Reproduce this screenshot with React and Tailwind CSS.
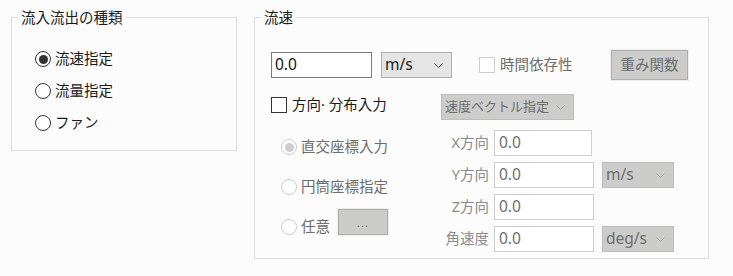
const Chevron = ({ color = '#555' }) => (
    <svg width="9" height="5" viewBox="0 0 9 5" fill="none">
        <polyline points="0.5,0.5 4.5,4.5 8.5,0.5" stroke={color} strokeWidth="1" />
    </svg>
);

const Radio = ({ checked, disabled }) => {
    const ring = disabled ? 'border-[#cccccc]' : 'border-[#333333]';
    const dot = disabled ? 'bg-[#cccccc]' : 'bg-[#333333]';
    return (
        <span className={`flex h-[16px] w-[16px] shrink-0 items-center justify-center rounded-full border bg-white ${ring}`}>
            {checked && <span className={`h-[9px] w-[9px] rounded-full ${dot}`} />}
        </span>
    );
};

const Checkbox = ({ disabled }) => (
    <span className={`block h-[16px] w-[16px] shrink-0 border bg-white ${disabled ? 'border-[#cccccc]' : 'border-[#333333]'}`} />
);

const Select = ({ value, width, disabled, latin, small }) => (
    <div
        className={`flex h-[26px] items-center justify-between whitespace-nowrap border pl-[3px] pr-[8px] ${width} ${
            disabled ? 'border-[#bdbdbd] bg-[#cccccb] text-[#6d6d6d]' : 'border-[#adadad] bg-[#e5e5e5] text-[#1a1a1a]'
        }`}
    >
        <span className={latin ? 'text-[15.5px]' : small ? 'text-[13px]' : ''}>{value}</span>
        <Chevron color={disabled ? '#a8a8a8' : '#555'} />
    </div>
);

const GrayButton = ({ children, className = '' }) => (
    <div className={`border border-[#eeeeee] ${className}`}>
        <div className="flex h-full w-full items-center justify-center border border-[#adadad] bg-[#cccccb] text-[#6d6d6d]">
            {children}
        </div>
    </div>
);

const NumField = ({ width = 'w-[100px]' }) => (
    <div className={`flex h-[26px] items-center border border-[#cfcfcf] bg-white px-[4px] text-[15.5px] text-[#6d6d6d] ${width}`}>
        0.0
    </div>
);

const App = () => {
    return (
        <div className="flex h-[276px] w-[733px] items-start gap-[17px] bg-[#fbfcfb] pl-[11px] pt-[7px] font-['Noto_Sans','Noto_Sans_CJK_JP',sans-serif] text-[14.5px] text-[#1a1a1a]">
            {/* 流入流出の種類 */}
            <fieldset className="h-[144px] w-[226px] border border-[#dcdcdc]">
                <legend className="ml-[6px] px-[3px] leading-[20px]">流入流出の種類</legend>
                <div className="flex flex-col pl-[23px] pt-[16px]">
                    {[
                        ['流速指定', true],
                        ['流量指定', false],
                        ['ファン', false],
                    ].map(([label, checked]) => (
                        <label key={label} className="flex h-[32px] items-center gap-[4px]">
                            <Radio checked={checked} />
                            <span>{label}</span>
                        </label>
                    ))}
                </div>
            </fieldset>

            {/* 流速 */}
            <fieldset className="h-[252px] w-[455px] border border-[#dcdcdc]">
                <legend className="ml-[6px] px-[3px] leading-[20px]">流速</legend>

                <div className="mt-[22px] flex h-[32px] items-center pl-[16px]">
                    <div className="flex h-[26px] w-[101px] items-center border border-[#7a7a7a] bg-white px-[3px] text-[15.5px] text-[#111]">
                        0.0
                    </div>
                    <Select value="m/s" width="ml-[9px] w-[71px]" latin />
                    <div className="ml-[27px] flex w-[131px] items-center gap-[5px] text-[#6d6d6d]">
                        <Checkbox disabled />
                        <span>時間依存性</span>
                    </div>
                    <GrayButton className="h-[32px] w-[79px]">重み関数</GrayButton>
                </div>

                <div className="mt-[13px] flex h-[26px] items-center pl-[16px]">
                    <div className="flex w-[170px] -translate-y-[2px] items-center gap-[5px]">
                        <Checkbox />
                        <span>方向· 分布入力</span>
                    </div>
                    <Select value="速度ベクトル指定" width="w-[133px]" disabled small />
                </div>

                <div className="mt-[7px] flex pl-[16px]">
                    <div className="flex w-[170px] flex-col pl-[10px] text-[#6d6d6d]">
                        <div className="flex h-[40px] items-center gap-[4px]">
                            <Radio checked disabled />
                            <span>直交座標入力</span>
                        </div>
                        <div className="flex h-[40px] items-center gap-[4px]">
                            <Radio disabled />
                            <span>円筒座標指定</span>
                        </div>
                        <div className="flex h-[40px] items-center gap-[4px]">
                            <Radio disabled />
                            <span>任意</span>
                            <GrayButton className="ml-[3px] h-[28px] w-[52px] -translate-y-[5px]">
                                <span className="text-[11px] leading-none tracking-[1px]">...</span>
                            </GrayButton>
                        </div>
                    </div>

                    <div className="mt-[3px] grid grid-cols-[48px_100px_72px] items-center gap-x-[5px] gap-y-[6px]">
                        <span className="text-right text-[#8c8c8c]">X方向</span>
                        <NumField width="w-[98px]" />
                        <span />
                        <span className="text-right text-[#8c8c8c]">Y方向</span>
                        <NumField />
                        <Select value="m/s" width="ml-[3px] w-[72px]" disabled latin />
                        <span className="text-right text-[#8c8c8c]">Z方向</span>
                        <NumField />
                        <span />
                        <span className="whitespace-nowrap text-right text-[#8c8c8c]">角速度</span>
                        <NumField />
                        <Select value="deg/s" width="ml-[3px] w-[72px]" disabled latin />
                    </div>
                </div>
            </fieldset>
        </div>
    );
};

export default App;
